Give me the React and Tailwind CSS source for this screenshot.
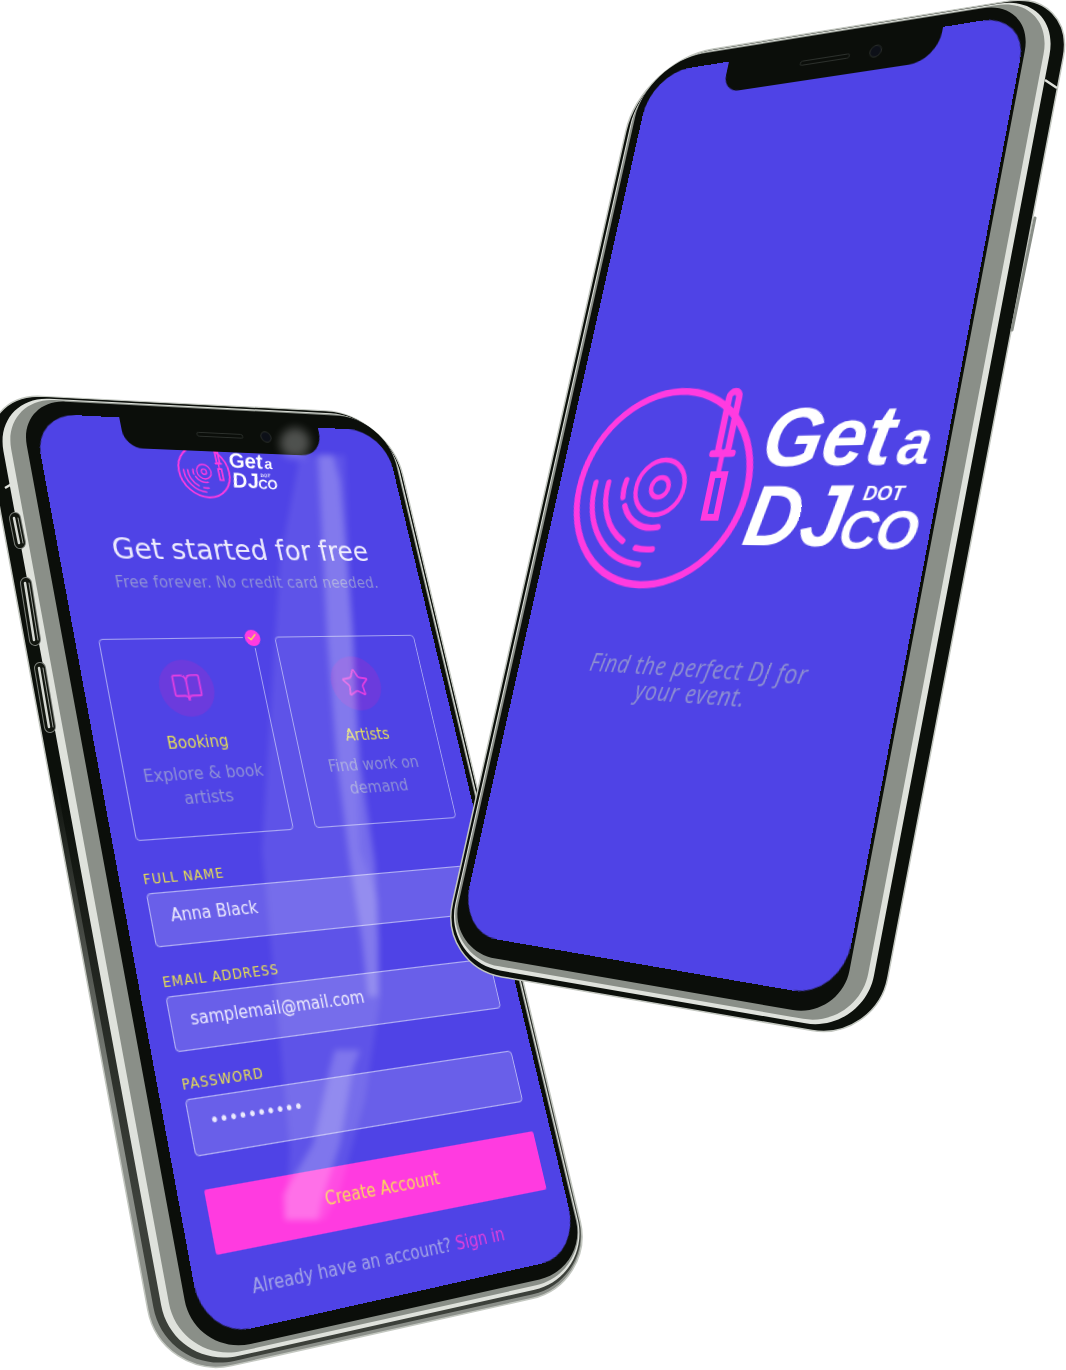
import { BookOpen, Star, Check } from 'lucide-react';

const FLAT_W = 375;
const FLAT_H = 812;

// maps the flat 375x812 screen on to four points of the picture
function quadTransform([p0, p1, p2, p3]) {
  const [x0, y0] = p0, [x1, y1] = p1, [x2, y2] = p2, [x3, y3] = p3;
  const dx1 = x1 - x2, dx2 = x3 - x2, sx = x0 - x1 + x2 - x3;
  const dy1 = y1 - y2, dy2 = y3 - y2, sy = y0 - y1 + y2 - y3;
  const det = dx1 * dy2 - dx2 * dy1;
  const g = (sx * dy2 - dx2 * sy) / det;
  const h = (dx1 * sy - sx * dy1) / det;
  const a = x1 - x0 + g * x1, b = x3 - x0 + h * x3;
  const d = y1 - y0 + g * y1, e = y3 - y0 + h * y3;
  const m = [a / FLAT_W, d / FLAT_W, 0, g / FLAT_W, b / FLAT_H, e / FLAT_H, 0, h / FLAT_H, 0, 0, 1, 0, x0, y0, 0, 1];
  return `matrix3d(${m.join(',')})`;
}

// pushes each edge of the quad outwards (top, right, bottom, left) and intersects again
function growQuad(quad, [t, r, b, l]) {
  const amounts = [t, r, b, l];
  const edges = quad.map((p, i) => {
    const q = quad[(i + 1) % 4];
    const dx = q[0] - p[0], dy = q[1] - p[1];
    const len = Math.hypot(dx, dy);
    const nx = dy / len, ny = -dx / len;
    return { x: p[0] + nx * amounts[i], y: p[1] + ny * amounts[i], dx, dy };
  });
  return quad.map((_, i) => {
    const e1 = edges[(i + 3) % 4], e2 = edges[i];
    const den = e1.dx * e2.dy - e1.dy * e2.dx;
    const s = ((e2.x - e1.x) * e2.dy - (e2.y - e1.y) * e2.dx) / den;
    return [e1.x + e1.dx * s, e1.y + e1.dy * s];
  });
}

function roundedPath(quad, radii) {
  let d = '';
  quad.forEach((c, i) => {
    const prev = quad[(i + 3) % 4], next = quad[(i + 1) % 4];
    const toward = (p, dist) => {
      const len = Math.hypot(p[0] - c[0], p[1] - c[1]);
      return [c[0] + (p[0] - c[0]) * dist / len, c[1] + (p[1] - c[1]) * dist / len];
    };
    const a = toward(prev, radii[i]), b = toward(next, radii[i]);
    const h1 = toward(prev, radii[i] * 0.45), h2 = toward(next, radii[i] * 0.45);
    d += `${i === 0 ? 'M' : 'L'}${a[0]} ${a[1]} C${h1[0]} ${h1[1]} ${h2[0]} ${h2[1]} ${b[0]} ${b[1]} `;
  });
  return d + 'Z';
}

function PhoneFrame({ quad, layers, radii, children }) {
  return (
    <svg width="1066" height="1370" className="absolute left-0 top-0">
      <defs>
        <linearGradient id="edgeOuter" gradientUnits="userSpaceOnUse" x1="0" y1="780" x2="0" y2="1120">
          <stop offset="0" stopColor="#0c100b" />
          <stop offset="1" stopColor="#8b8f89" />
        </linearGradient>
        <linearGradient id="edgeInner" gradientUnits="userSpaceOnUse" x1="0" y1="800" x2="0" y2="1200">
          <stop offset="0" stopColor="#0c100b" />
          <stop offset="1" stopColor="#3c403a" />
        </linearGradient>
      </defs>
      {layers.map(({ grow, fill, stroke }) => {
        const extra = (grow[0] + grow[1] + grow[2] + grow[3]) / 4;
        return (
          <path
            key={fill}
            d={roundedPath(growQuad(quad, grow), radii.map(r => r + extra))}
            fill={fill}
            stroke={stroke}
            strokeWidth={stroke ? 1.5 : 0}
          />
        );
      })}
      {children}
    </svg>
  );
}

function SideButton({ x1, y1, x2, y2 }) {
  return (
    <g strokeLinecap="round">
      <line x1={x1} y1={y1} x2={x2} y2={y2} stroke="#7b7f79" strokeWidth="12" />
      <line x1={x1} y1={y1} x2={x2} y2={y2} stroke="#12160f" strokeWidth="10" />
      <line x1={x1 - 1} y1={y1} x2={x2 - 1} y2={y2} stroke="#d6d9d3" strokeWidth="2.5" />
      <line x1={x1 + 3} y1={y1} x2={x2 + 3} y2={y2} stroke="#9a9e98" strokeWidth="1" />
    </g>
  );
}

function Logo({ className }) {
  return (
    <svg viewBox="0 0 360 195" className={className}>
      <g fill="none" stroke="#ff3be0" strokeWidth="6.5" strokeLinecap="round">
        <circle cx="93" cy="95" r="88" />
        <g transform="translate(-5 0)" strokeWidth="5.5">
          <circle cx="97" cy="95" r="25" strokeWidth="4.5" />
          <circle cx="97" cy="95" r="9" strokeWidth="4.5" />
          <path d="M27 90 A70 70 0 0 0 92 165" />
          <path d="M41 90 A56 56 0 0 0 70 144" />
          <path d="M85 150 A56 56 0 0 0 103 151" />
          <path d="M60 88 A37 37 0 0 0 60 104" />
          <path d="M64 112 A37 37 0 0 0 104 131" />
        </g>
        <path d="M149 66 L149 84" strokeWidth="5" />
        <rect x="144" y="9" width="10" height="56" rx="5" />
        <path d="M139 65 L159 65" />
        <rect x="144" y="84" width="12" height="38" strokeWidth="6" strokeLinecap="butt" />
      </g>
      <g fill="#fff" fontFamily="'Liberation Sans', sans-serif" fontWeight="700" fontStyle="italic">
        <text x="188" y="77" fontSize="73">Get</text>
        <text x="315" y="77" fontSize="52">a</text>
        <text x="186" y="146" fontSize="74">DJ</text>
        <text x="277" y="148" fontSize="47" letterSpacing="-1">CO</text>
        <text x="292" y="107" fontSize="17">DOT</text>
      </g>
    </svg>
  );
}

function Notch() {
  return (
    <div className="absolute left-[85px] top-0 w-[213px] h-[31px] rounded-bl-[18px] rounded-br-[26px] bg-[#0b0e0a]">
      <div className="absolute left-[77px] top-[11px] w-[50px] h-[5px] rounded-full border border-[#2c302c]" />
      <div className="absolute left-[146px] top-[7px] w-[12px] h-[12px] rounded-full border border-[#2c302c] bg-[#0d1018]" />
    </div>
  );
}

function ChoiceCard({ icon: Icon, title, lines, checked }) {
  return (
    <div className="relative flex-1 h-[185px] rounded-[4px] border border-[#a5a3f2] flex flex-col items-center pt-[20px]">
      {checked && (
        <div className="absolute -top-[10px] -right-[10px] w-[20px] h-[20px] rounded-full bg-[#ff3be0] border-2 border-[#4f43e6] flex items-center justify-center">
          <Check size={11} strokeWidth={3} className="text-[#f5e04f]" />
        </div>
      )}
      <div className="w-[54px] h-[54px] rounded-full bg-[#6b3bdd] flex items-center justify-center">
        <Icon size={31} strokeWidth={1.4} className="text-[#e03fe2]" />
      </div>
      <div className="mt-[14px] text-[15px] leading-[20px] text-[#e3de58]">{title}</div>
      <div className="mt-[8px] text-[15.5px] leading-[22px] text-[#8f91d6] text-center whitespace-nowrap">
        {lines.map(l => <div key={l}>{l}</div>)}
      </div>
    </div>
  );
}

function Field({ label, value, className }) {
  return (
    <div className={className}>
      <div className="text-[12px] leading-[14px] tracking-[1px] uppercase text-[#e8e050]">{label}</div>
      <div className="mt-[5px] h-[47px] rounded-[4px] border border-[#b3b1f4] bg-white/15 flex items-center px-[18px] pb-[4px] text-[15px] text-[#eceafd]">
        {value}
      </div>
    </div>
  );
}

function SignupScreen() {
  return (
    <div className="absolute inset-0 rounded-[42px] overflow-hidden bg-[#4f43e6] font-['DejaVu_Sans',sans-serif] flex flex-col px-[22px]">
      <Logo className="w-[108px] mx-auto mt-[24px] shrink-0" />
      <div className="mt-[34px] text-center text-[28px] leading-[32px] text-[#eceafd] whitespace-nowrap">Get started for free</div>
      <div className="mt-[7px] text-center text-[15px] leading-[18px] tracking-[0.2px] text-[#8f91d6] whitespace-nowrap">Free forever. No credit card needed.</div>
      <div className="mt-[45px] flex gap-[22px]">
        <ChoiceCard icon={BookOpen} title="Booking" lines={['Explore & book', 'artists']} checked />
        <ChoiceCard icon={Star} title="Artists" lines={['Find work on', 'demand']} />
      </div>
      <div className="mt-[27px]">
        <Field label="Full name" value="Anna Black" className="mb-[23px]" />
        <Field label="Email address" value="samplemail@mail.com" className="mb-[20px]" />
        <Field label="Password" value="••••••••••" className="mb-[22px]" />
      </div>
      <div className="mt-[5px] ml-[2px] -mr-[3px] h-[52px] rounded-[2px] bg-[#ff3be0] flex items-center justify-center text-[15px] text-[#fbd95a] shrink-0">Create Account</div>
      <div className="mt-[21px] pr-[24px] text-center text-[15px] leading-[18px] text-[#a4a6e6] whitespace-nowrap">
        Already have an account? <span className="text-[#e53fdc]">Sign in</span>
      </div>
      <Notch />
    </div>
  );
}

function SplashScreen() {
  return (
    <div className="absolute inset-0 rounded-[42px] overflow-hidden bg-[#4f43e6] flex flex-col items-center">
      <Logo className="w-[360px] mt-[312px] ml-[20px] shrink-0" />
      <div className="mt-[47px] pr-[6px] text-center text-[21px] leading-[22px] tracking-[0.6px] italic text-[#8f91d0] font-['Open_Sans',sans-serif] whitespace-nowrap">
        Find the perfect DJ for<br />your event.
      </div>
      <Notch />
    </div>
  );
}

function Glare() {
  return (
    <svg width="1066" height="1370" className="absolute left-0 top-0">
      <defs>
        <filter id="soft" x="-30%" y="-10%" width="160%" height="120%"><feGaussianBlur stdDeviation="3" /></filter>
        <filter id="softer" x="-50%" y="-50%" width="200%" height="200%"><feGaussianBlur stdDeviation="5" /></filter>
      </defs>
      <g fill="#fff">
        <path filter="url(#soft)" opacity="0.09" d="M300 455 L345 455 L360 850 L378 900 L380 1000 L365 1100 L340 1190 L325 1220 L285 1220 L290 1150 L262 850 L280 560 Z" />
        <path filter="url(#soft)" opacity="0.22" d="M318 455 L327 634 L337 762 L350 864 L362 940 L368 997 L378 996 L378 940 L375 864 L360 762 L353 634 L340 481 L333 455 Z" />
        <path filter="url(#soft)" opacity="0.2" d="M335 1050 L360 1050 L353 1068 L340 1144 L322 1200 L318 1220 L285 1220 L283 1195 L313 1144 L330 1068 Z" />
        <circle filter="url(#softer)" cx="295" cy="443" r="15" opacity="0.28" />
      </g>
    </svg>
  );
}

const leftQuad = [[33, 413], [384, 431], [580, 1255], [204, 1339]];
const rightQuad = [[652, 74], [1029, 13], [841, 999], [459, 933]];

const leftLayers = [
  { grow: [17, 8, 32, 50], fill: 'url(#edgeOuter)', stroke: '#c3c7c0' },
  { grow: [16.5, 7, 28, 44], fill: 'url(#edgeInner)' },
  { grow: [15, 6, 24, 36], fill: '#dfe2dc' },
  { grow: [14, 5, 20, 28], fill: '#8a8f88' },
  { grow: [13, 4, 15, 12], fill: '#0b0e0a' },
];
const rightLayers = [
  { grow: [15, 42, 36, 13], fill: '#0c100b', stroke: '#c3c7c0' },
  { grow: [14, 28, 30, 10], fill: '#dfe2dc' },
  { grow: [13, 22, 26, 9], fill: '#8a8f88' },
  { grow: [12, 3, 19, 7], fill: '#0b0e0a' },
];

export default function App() {
  return (
    <div className="relative w-[1066px] h-[1370px] bg-white overflow-hidden">
      <PhoneFrame quad={leftQuad} layers={leftLayers} radii={[36, 36, 38, 46]}>
        <line x1="5" y1="488" x2="15" y2="482" stroke="#dfe2dc" strokeWidth="2.5" />
        <SideButton x1={15} y1={518} x2={20} y2={543} />
        <SideButton x1={26} y1={583} x2={35} y2={640} />
        <SideButton x1={40} y1={668} x2={50} y2={727} />
      </PhoneFrame>
      <div className="absolute left-0 top-0 w-[375px] h-[812px] origin-top-left" style={{ transform: quadTransform(leftQuad) }}>
        <SignupScreen />
      </div>
      <Glare />
      <PhoneFrame quad={rightQuad} layers={rightLayers} radii={[46, 42, 38, 38]}>
        <line x1="1045" y1="80" x2="1057" y2="88" stroke="#dfe2dc" strokeWidth="2.5" />
        <line x1="1035" y1="218" x2="1012" y2="330" stroke="#8a8f88" strokeWidth="3" strokeLinecap="round" />
      </PhoneFrame>
      <div className="absolute left-0 top-0 w-[375px] h-[812px] origin-top-left" style={{ transform: quadTransform(rightQuad) }}>
        <SplashScreen />
      </div>
    </div>
  );
}
